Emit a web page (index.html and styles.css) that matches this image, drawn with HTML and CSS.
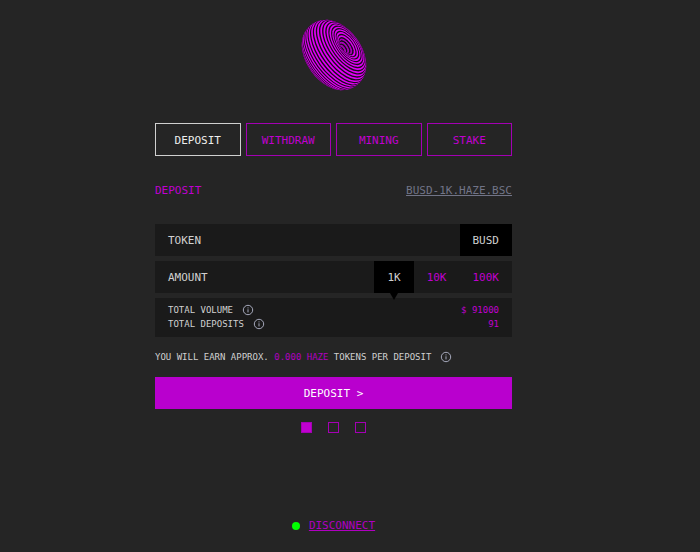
FILE: index.html
```html
<!DOCTYPE html>
<html lang="en">
<head>
<meta charset="utf-8">
<title>Haze</title>
<link rel="stylesheet" href="styles.css">
</head>
<body>
<svg class="sprite" aria-hidden="true">
  <symbol id="info" viewBox="0 0 12 12">
    <circle cx="6" cy="6" r="4.7" fill="none" stroke="currentColor"/>
    <path d="M6 5.3V8.4M6 3.4V4.4" stroke="currentColor" fill="none"/>
  </symbol>
</svg>
<main class="page">
  <svg class="logo" id="torus" viewBox="-40 -40 80 80" aria-hidden="true"></svg>

  <nav class="tabs">
    <button class="tab active" type="button">DEPOSIT</button>
    <button class="tab" type="button">WITHDRAW</button>
    <button class="tab" type="button">MINING</button>
    <button class="tab" type="button">STAKE</button>
  </nav>

  <header class="heading">
    <h1 class="title">DEPOSIT</h1>
    <a class="pool" href="#">BUSD-1K.HAZE.BSC</a>
  </header>

  <section class="panel">
    <div class="row">
      <span class="label">TOKEN</span>
      <button class="option selected" type="button">BUSD</button>
    </div>
    <div class="row">
      <span class="label">AMOUNT</span>
      <button class="option selected pointer" type="button">1K</button>
      <button class="option" type="button">10K</button>
      <button class="option" type="button">100K</button>
    </div>
    <div class="stats">
      <div class="stat"><span>TOTAL VOLUME</span><svg class="info"><use href="#info"/></svg><span class="value">$ 91000</span></div>
      <div class="stat"><span>TOTAL DEPOSITS</span><svg class="info"><use href="#info"/></svg><span class="value">91</span></div>
    </div>
  </section>

  <p class="earn"><span>YOU WILL EARN APPROX. <span class="accent">0.000 HAZE</span> TOKENS PER DEPOSIT</span><svg class="info"><use href="#info"/></svg></p>

  <button class="submit" type="button">DEPOSIT &gt;</button>

  <div class="steps"><i class="step done"></i><i class="step"></i><i class="step"></i></div>

  <footer class="account"><i class="status"></i><a class="disconnect" href="#">DISCONNECT</a></footer>
</main>
<script src="torus.js"></script>
</body>
</html>
```
FILE: styles.css
```css
* { box-sizing: border-box; }

body {
  margin: 0;
  padding: 0 33px 0 0;
  background: #252525;
  color: #d0d0d0;
  font: 11px/16px "DejaVu Sans Mono", "Liberation Mono", monospace;
}

button {
  font: inherit;
  color: inherit;
  background: none;
  border: 0;
  margin: 0;
  padding: 0;
  cursor: pointer;
}

.sprite { position: absolute; width: 0; height: 0; }

.page {
  display: flex;
  flex-direction: column;
  max-width: 357px;
  margin: 0 auto;
  padding-top: 15px;
}

.logo { width: 80px; height: 80px; align-self: center; }

.tabs {
  display: grid;
  grid-template-columns: repeat(4, 1fr);
  gap: 5px;
  margin-top: 28px;
}

.tab { height: 33px; padding-top: 2px; border: 1px solid #a400b4; color: #c000d0; }
.tab.active { border-color: #d0d0d0; color: #eeeeee; }

.heading {
  display: flex;
  justify-content: space-between;
  margin-top: 27px;
}

.title { margin: 0; font: inherit; color: #c000d0; }
.pool { color: #717487; }

.panel {
  display: flex;
  flex-direction: column;
  gap: 5px;
  margin-top: 25px;
}

.row { display: flex; height: 32px; background: #1a1a1a; }
.label { flex: 1; padding: 9px 13px 7px; }
.option { padding: 2px 13px 0; color: #c000d0; }
.option.selected { background: #000; color: #d0d0d0; }

.pointer { position: relative; }
.pointer::after {
  content: "";
  position: absolute;
  top: 100%;
  left: 50%;
  margin-left: -4px;
  border: 4px solid transparent;
  border-top: 7px solid #000;
  border-bottom: 0;
}

.stats { padding: 5px 13px 6px; background: #1a1a1a; font-size: 9px; line-height: 14px; }
.stat { display: flex; align-items: center; }
.value { margin-left: auto; color: #c000d0; }
.info { width: 12px; height: 12px; margin-left: 9px; color: #a5a8bb; }

.earn {
  display: flex;
  align-items: center;
  margin: 12px 0 0;
  font-size: 9px;
}
.accent { color: #b000c0; }

.submit {
  height: 32px;
  margin-top: 12px;
  padding-top: 2px;
  background: #b900ce;
  color: #fff;
}

.steps { display: flex; justify-content: center; gap: 16px; margin-top: 13px; }
.step { width: 11px; height: 11px; border: 1px solid #a400b4; }
.step.done { background: #c000d0; }

.account {
  display: flex;
  justify-content: center;
  align-items: center;
  gap: 9px;
  margin-top: 85px;
}
.status { width: 8px; height: 8px; border-radius: 50%; background: #00ff00; }
.disconnect { color: #b000c0; }
```
FILE: torus.js
```js
// Draws a striped horn torus, tilted 62 degrees, as a stack of projected rings.
(function () {
  var NS = "http://www.w3.org/2000/svg";
  var svg = document.getElementById("torus");
  var R = 19;
  var TILT = 62 * Math.PI / 180;
  var STEP = 4.8;

  function make(name, attrs, parent) {
    var el = document.createElementNS(NS, name);
    for (var key in attrs) el.setAttribute(key, attrs[key]);
    parent.appendChild(el);
    return el;
  }

  function ring(degrees) {
    var t = degrees * Math.PI / 180;
    var a = R * (1 + Math.cos(t));
    return { cx: R * Math.sin(t) * Math.sin(TILT), cy: 0, rx: a * Math.cos(TILT), ry: a };
  }

  var defs = make("defs", {}, svg);
  var layer = make("g", { transform: "rotate(-36)" }, svg);
  var index = 0;
  for (var d = -120; d < 180; d += STEP) {
    var inside = d > 117;
    // Lit bands are slightly wider than the dark ones between them.
    var shape = ring(index % 2 ? d + 0.6 : d);
    if (inside) {
      var clip = make("clipPath", { id: "rim" + index }, defs);
      make("ellipse", shape, clip);
      layer = make("g", { "clip-path": "url(#rim" + index + ")" }, layer);
    }
    shape.fill = index % 2 ? "#160d18" : inside ? "#a800b8" : "#e000f4";
    make("ellipse", shape, layer);
    index++;
  }
})();
```
